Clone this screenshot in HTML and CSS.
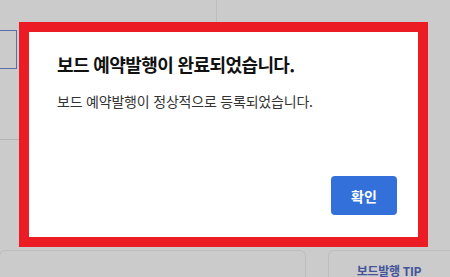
FILE: index.html
```html
<!DOCTYPE html>
<html lang="ko">
<head>
<meta charset="utf-8">
<link rel="stylesheet" href="styles.css">
</head>
<body>
<div class="page">
  <div class="top-row"><div class="top-left"></div></div>
  <div class="side-box"></div>
  <div class="divider"></div>
  <div class="bottom-row">
    <div class="card card-main"></div>
    <div class="card card-tip"><span class="tip-title">보드발행 TIP</span></div>
  </div>
</div>
<div class="modal">
  <h2 class="modal-title">보드 예약발행이 완료되었습니다.</h2>
  <p class="modal-text">보드 예약발행이 정상적으로 등록되었습니다.</p>
  <div class="modal-actions"><button class="btn-confirm">확인</button></div>
</div>
</body>
</html>
```
FILE: styles.css
```css
html, body {
  margin: 0;
  padding: 0;
}
body {
  width: 450px;
  height: 277px;
  overflow: hidden;
  background: #cbcbcb;
  font-family: "Noto Sans CJK KR", "Noto Sans", sans-serif;
  position: relative;
}
.page {
  display: flex;
  flex-direction: column;
  width: 450px;
  height: 277px;
}
.top-row {
  height: 22px;
  flex: none;
}
.top-left {
  width: 216px;
  height: 22px;
  border-right: 1px solid #bdbdbd;
}
.side-box {
  margin-top: 8px;
  margin-left: -1px;
  width: 16px;
  height: 37px;
  border: 1px solid #5870a8;
  flex: none;
}
.divider {
  margin-top: 70px;
  width: 120px;
  height: 1px;
  background: #b5b5b5;
  flex: none;
}
.bottom-row {
  margin-top: 110px;
  display: flex;
  gap: 22px;
  flex: 1;
}
.card {
  border: 1px solid #bdbdbd;
  border-bottom: none;
  border-radius: 6px 6px 0 0;
  background: #cbcbcb;
}
.card-main {
  width: 305px;
  margin-left: -1px;
}
.card-tip {
  flex: 1;
  margin-right: -8px;
  display: flex;
  justify-content: center;
  padding-top: 12px;
  padding-right: 8px;
}
.tip-title {
  font-size: 12px;
  line-height: 16px;
  font-weight: 700;
  color: #45549a;
  letter-spacing: -0.3px;
}
.modal {
  position: absolute;
  left: 19px;
  top: 22px;
  width: 409px;
  height: 225px;
  box-sizing: border-box;
  border: 10px solid #ec1c24;
  background: #fff;
  padding: 20px 21px 22px 28px;
  display: flex;
  flex-direction: column;
}
.modal-title {
  margin: 0;
  font-size: 18px;
  line-height: 24px;
  font-weight: 700;
  color: #111;
  letter-spacing: -0.6px;
}
.modal-text {
  margin: 15px 0 0 0;
  font-size: 14px;
  line-height: 20px;
  color: #333;
  letter-spacing: -0.2px;
}
.modal-actions {
  margin-top: auto;
  display: flex;
  justify-content: flex-end;
}
.btn-confirm {
  width: 66px;
  height: 39px;
  border: none;
  border-radius: 4px;
  background: #3370d9;
  color: #fff;
  font-family: inherit;
  font-size: 14px;
  font-weight: 700;
}
```
